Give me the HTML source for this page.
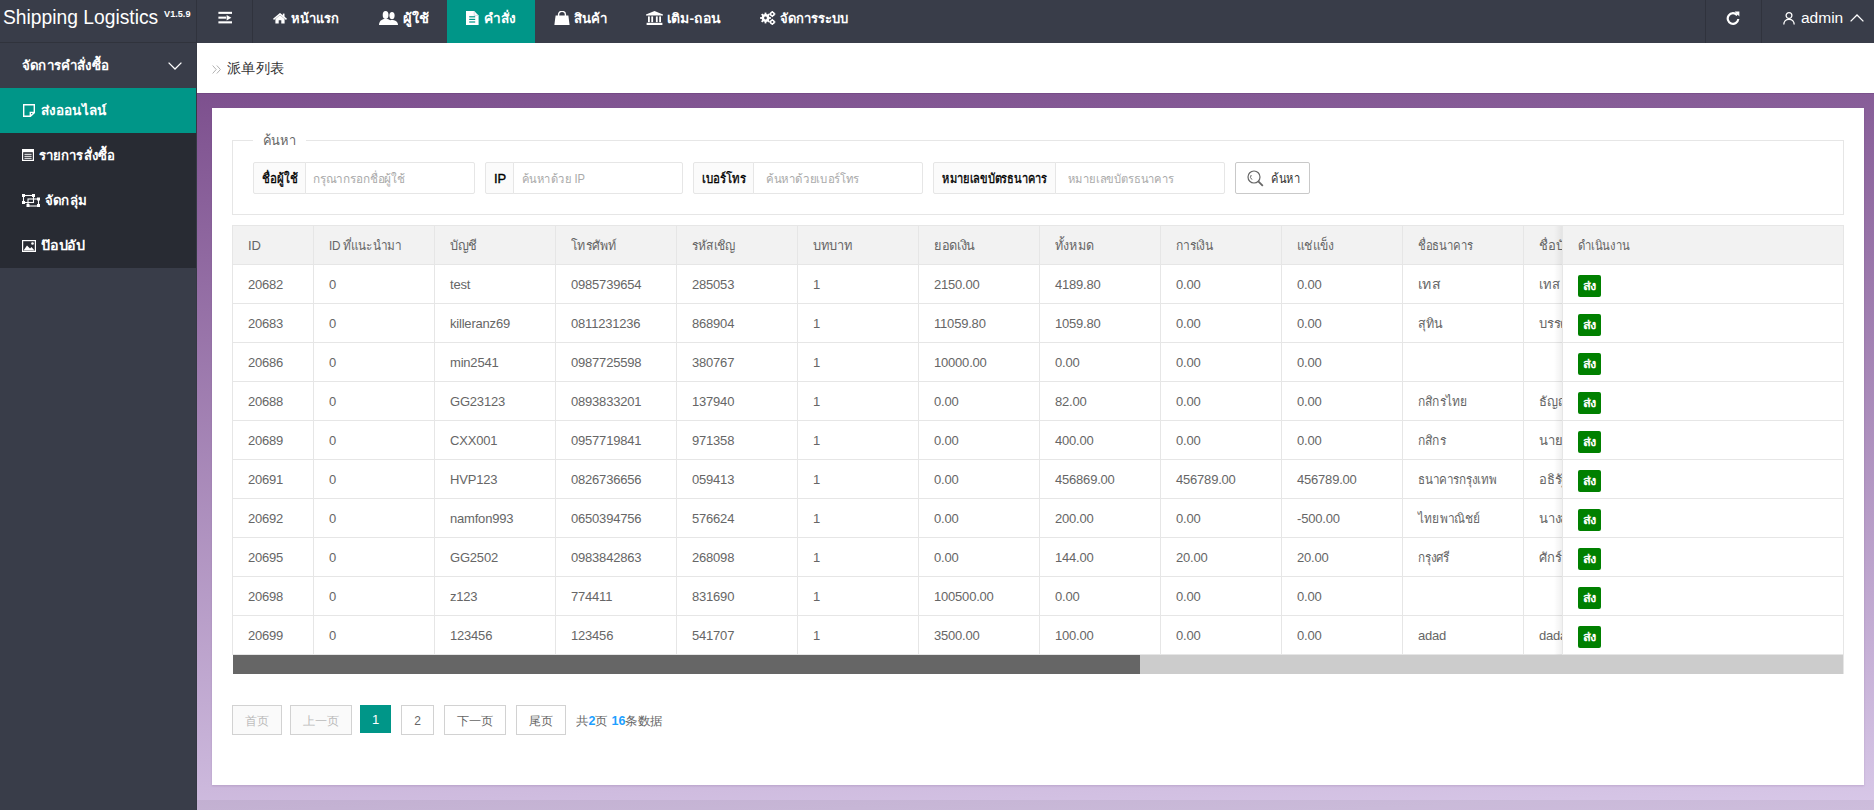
<!DOCTYPE html><html><head><meta charset="utf-8"><title>Shipping Logistics</title><style>*{box-sizing:border-box;margin:0;padding:0}
html,body{width:1874px;height:810px;overflow:hidden;background:#fff;font-family:"Liberation Sans",sans-serif;color:#666}
.hdr{position:absolute;left:0;top:0;width:1874px;height:43px;background:#393D49;z-index:5}
.logo{position:absolute;left:3px;top:5px;color:#fff;font-size:20px;line-height:24px;white-space:nowrap;transform:scaleX(0.963);transform-origin:0 0}
.ver{font-size:9.5px;font-weight:bold;vertical-align:top;position:relative;top:-3px;margin-left:6px}
.vline{position:absolute;top:0;width:1px;height:43px;background:#30333d}
.ico{position:absolute;display:block}
.navact{position:absolute;top:0;height:43px;background:#009688}
.navt{position:absolute;top:0;line-height:38px;color:#fff;font-size:13px;font-weight:bold;white-space:nowrap}
.admin{position:absolute;left:1801px;top:8px;line-height:20px;color:#fff;font-size:15.5px}
.side{position:absolute;left:0;top:43px;width:197px;height:767px;background:#393D49}
.sp{position:absolute;left:22px;top:0;line-height:45px;color:#fff;font-size:13px;font-weight:bold;white-space:nowrap}
.sdl{position:absolute;left:0;top:45px;width:197px;height:180px;background:#282B33}
.sact{position:absolute;left:0;top:45px;width:197px;height:45px;background:#009688}
.si{position:absolute;line-height:45px;color:#fff;font-size:13px;font-weight:bold;white-space:nowrap}
.crumb{position:absolute;left:197px;top:43px;width:1677px;height:50px;background:#fff}
.gt{position:absolute;left:15px;top:15px;font-size:14px;color:#999;line-height:20px}
.ct{position:absolute;left:30px;top:15px;font-size:14px;color:#333;line-height:20px}
.purple{position:absolute;left:197px;top:93px;width:1677px;height:717px;background:linear-gradient(177.1deg,rgb(125,80,142),rgb(216,200,232))}
.ptop{position:absolute;left:197px;top:93px;width:1677px;height:1px;background:rgba(40,10,60,0.12)}
.band{position:absolute;left:197px;top:800px;width:1677px;height:10px;background:rgba(0,0,0,0.05)}
.card{position:absolute;left:212px;top:108px;width:1652px;height:677px;background:#fff;box-shadow:0 1px 2px rgba(60,20,80,0.15)}
.fs{position:absolute;left:232px;top:140px;width:1612px;height:75px;border:1px solid #e6e6e6}
.lg{position:absolute;left:253px;top:130px;width:53px;height:20px;background:#fff;font-size:14px;line-height:20px;color:#666}
.gl{position:absolute;top:162px;height:32px;border:1px solid #e6e6e6;border-radius:2px 0 0 2px;background:#FBFBFB}
.gi{position:absolute;top:162px;height:32px;border:1px solid #e6e6e6;border-radius:0 2px 2px 0;background:#fff}
.sbtn{position:absolute;left:1235px;top:162px;width:75px;height:32px;border:1px solid #C9C9C9;border-radius:2px;background:#fff}
.sbtn>span{position:absolute;left:35px;top:0;line-height:32px;font-size:13px;color:#333}
.tbl{position:absolute;left:232px;top:225px;width:1612px;height:450px;overflow:hidden}
.thead{position:absolute;left:0;top:0;width:1612px;height:39px;background:#f2f2f2}
.cv{position:absolute;top:0;width:1px;height:430px;background:#e6e6e6}
.rh{position:absolute;left:0;width:1612px;height:1px;background:#e6e6e6}
.cell{position:absolute;height:39px;line-height:39px;padding-left:16px;font-size:13px;color:#666;letter-spacing:-0.2px;white-space:nowrap;overflow:hidden}
.th{line-height:40px}
.fix{position:absolute;left:1330px;top:1px;width:281px;height:429px;background:#fff}
.fixshadow{position:absolute;left:-8px;top:0;width:8px;height:430px;background:linear-gradient(to right,rgba(0,0,0,0),rgba(0,0,0,0.06))}
.fhead{position:absolute;left:0;top:0;width:282px;height:39px;background:#f2f2f2;border-left:1px solid #e6e6e6;border-bottom:1px solid #e6e6e6}
.fhead>span{position:absolute;left:15px;line-height:40px;font-size:13px;color:#666}
.frow{position:absolute;left:0;width:282px;height:39px;border-left:1px solid #e6e6e6;border-bottom:1px solid #e6e6e6}
.sbt{position:absolute;left:15px;top:10px;width:23px;height:22px;background:#008000;border-radius:2px;color:#fff;font-weight:bold;font-size:12px;line-height:22px;text-align:center;overflow:hidden;white-space:nowrap}
.sbar{position:absolute;left:1px;top:430px;width:1610px;height:19px;background:#ccc}
.sthumb{position:absolute;left:0;top:0;width:907px;height:19px;background:#666}
.pg{position:absolute;top:705px;height:30px;border:1px solid #d2d2d2;background:#fff;text-align:center;line-height:30px;font-size:12px;color:#666}
.pg.dis{color:#bbb;background:#fafafa}
.pg.cur{top:705px;height:28px;border:0;background:#009688;color:#fff;line-height:30px;font-size:13px}
.pcount{position:absolute;left:576px;top:711px;line-height:20px;font-size:12px;color:#666;white-space:nowrap}
.pcount b{color:#1E9FFF}
.stop{position:absolute;left:0;top:0;width:197px;height:1px;background:#30333c}
.f{display:inline-block;transform-origin:0 50%;white-space:nowrap}
.fc{transform-origin:50% 50%}
.lgt{position:absolute;left:10px;top:0}
.glt{position:absolute;top:163px;line-height:32px;color:#000;font-weight:normal;-webkit-text-stroke:0.35px #000;font-size:13px;white-space:nowrap}
.git{position:absolute;top:163px;line-height:32px;color:#aaa;font-size:12px;white-space:nowrap}
.hbot{position:absolute;left:0;top:42px;width:197px;height:1px;background:#30333c}
.sline{position:absolute;left:196px;top:0;width:1px;height:767px;background:#353944;z-index:2}
</style></head><body><div class="hdr"><div class="logo">Shipping Logistics<span class="ver">V1.5.9</span></div><div class="vline" style="left:196px"></div><div class="hbot"></div><div class="vline" style="left:252px"></div><svg class="ico" style="left:218px;top:11px" width="15" height="13" viewBox="0 0 15 13"><rect x="0.4" y="0.8" width="13.6" height="2.1" fill="#fff"/><rect x="0.4" y="5.6" width="7.8" height="2.1" fill="#fff"/><path d="M8.6 3.9 L13.4 6.65 L8.6 9.4Z" fill="#fff"/><rect x="0.4" y="10.3" width="13.6" height="2.1" fill="#fff"/></svg><div class="navact" style="left:447px;width:88px"></div><svg class="ico" style="left:273px;top:13px" width="14" height="11" viewBox="0 0 14 11"><path d="M2.4 6 L7 2.1 L11.6 6 V10.6 H8.3 V7.3 H5.7 V10.6 H2.4Z" fill="#fff"/><path d="M0.5 6.3 L7 0.9 L13.5 6.3" stroke="#fff" stroke-width="1.5" fill="none"/><rect x="9.8" y="0.6" width="1.7" height="3.4" fill="#fff"/></svg><div class="navt" style="left:291px"><span class="f" style="--w:48">หน้าแรก</span></div><svg class="ico" style="left:379px;top:11px" width="19" height="14" viewBox="0 0 19 14"><ellipse cx="13" cy="4.6" rx="2.6" ry="3.6" fill="#fff"/><path d="M9 14 C9 11.2 10.6 9.3 12.2 9 H14 C16.6 9.3 19 11 19 14Z" fill="#fff"/><path d="M11.5 14 C11.5 10.5 9.5 8.6 8.6 8.2" stroke="#393D49" stroke-width="0.9" fill="none"/><ellipse cx="6.6" cy="4" rx="2.9" ry="4" fill="#fff"/><path d="M0 14 C0 10.6 2.4 8.4 5 8 H8.4 C11 8.4 13.4 10.6 13.4 14Z" fill="#fff"/></svg><div class="navt" style="left:403px"><span class="f" style="--w:26">ผู้ใช้</span></div><svg class="ico" style="left:466px;top:11px" width="13" height="14" viewBox="0 0 13 14"><path d="M0 0 H8.2 L12.6 4.4 V14 H0Z" fill="#fff"/><path d="M8.2 0.3 V4.4 H12.3" stroke="#c9c9d9" stroke-width="0.7" fill="none"/><rect x="3.2" y="5.2" width="6" height="1.2" fill="#009688"/><rect x="3.2" y="7.8" width="6" height="1.2" fill="#009688"/><rect x="3.2" y="10.4" width="6" height="1.2" fill="#009688"/></svg><div class="navt" style="left:484px"><span class="f" style="--w:31.5">คำสั่ง</span></div><svg class="ico" style="left:554px;top:11px" width="16" height="14" viewBox="0 0 16 14"><path d="M4.6 5 V3.6 C4.6 1.6 6 0.4 8 0.4 C10 0.4 11.4 1.6 11.4 3.6 V5" stroke="#fff" stroke-width="1.4" fill="none"/><path d="M1.6 4.6 H14.4 L15.6 14 H0.4Z" fill="#fff"/></svg><div class="navt" style="left:574px"><span class="f" style="--w:33.5">สินค้า</span></div><svg class="ico" style="left:646px;top:11px" width="17" height="14" viewBox="0 0 17 14"><path d="M8.5 0 L17 3.4 V4.6 H0 V3.4Z" fill="#fff"/><rect x="2" y="5.4" width="1.8" height="5.8" fill="#fff"/><rect x="5.3" y="5.4" width="1.8" height="5.8" fill="#fff"/><rect x="9.9" y="5.4" width="1.8" height="5.8" fill="#fff"/><rect x="13.2" y="5.4" width="1.8" height="5.8" fill="#fff"/><rect x="0.6" y="11.8" width="15.8" height="2.2" fill="#fff"/></svg><div class="navt" style="left:667px"><span class="f" style="--w:54">เติม-ถอน</span></div><svg class="ico" style="left:760px;top:11px" width="16" height="14" viewBox="0 0 16 14"><g fill="#fff"><circle cx="5.5" cy="7" r="3.9"/><rect x="4.6" y="1.6" width="1.8" height="10.8"/><rect x="0.1" y="6.1" width="10.8" height="1.8"/><rect x="4.6" y="1.6" width="1.8" height="10.8" transform="rotate(45 5.5 7)"/><rect x="4.6" y="1.6" width="1.8" height="10.8" transform="rotate(-45 5.5 7)"/><circle cx="12.3" cy="3" r="2.5"/><circle cx="12.3" cy="11" r="2.5"/><rect x="11.7" y="-0.1" width="1.2" height="6.2"/><rect x="9.2" y="2.4" width="6.2" height="1.2"/><rect x="11.7" y="7.9" width="1.2" height="6.2"/><rect x="9.2" y="10.4" width="6.2" height="1.2"/></g><circle cx="5.5" cy="7" r="1.4" fill="#393D49"/><circle cx="12.3" cy="3" r="1" fill="#393D49"/><circle cx="12.3" cy="11" r="1" fill="#393D49"/></svg><div class="navt" style="left:780px"><span class="f" style="--w:68">จัดการระบบ</span></div><div class="vline" style="left:1705px"></div><div class="vline" style="left:1761px"></div><svg class="ico" style="left:1726px;top:11px" width="14" height="14" viewBox="0 0 14 14"><path d="M11.2 4.2 A5.3 5.3 0 1 0 12.3 8" stroke="#fff" stroke-width="2.2" fill="none"/><path d="M8.6 0.6 L13.4 0.6 L13.4 5.6Z" fill="#fff"/></svg><svg class="ico" style="left:1783px;top:12px" width="12" height="13" viewBox="0 0 12 13"><circle cx="6" cy="3.6" r="2.9" stroke="#fff" stroke-width="1.3" fill="none"/><path d="M0.8 12.6 C0.8 9 3 7.3 6 7.3 C9 7.3 11.2 9 11.2 12.6" stroke="#fff" stroke-width="1.3" fill="none"/></svg><div class="admin">admin</div><svg class="ico" style="left:1850px;top:14px" width="14" height="8" viewBox="0 0 14 8"><path d="M0.6 7.4 L7 1 L13.4 7.4" stroke="#fff" stroke-width="1.3" fill="none"/></svg></div><div class="side"><div class="sline"></div><div class="sp"><span class="f" style="--w:87">จัดการคำสั่งซื้อ</span></div><svg class="ico" style="left:168px;top:19px" width="14" height="8" viewBox="0 0 14 8"><path d="M0.6 0.6 L7 7 L13.4 0.6" stroke="#fff" stroke-width="1.3" fill="none"/></svg><div class="sdl"></div><div class="sact"></div><svg class="ico" style="left:23px;top:61px" width="12" height="13" viewBox="0 0 12 13"><path d="M0.7 0.7 H11.3 V8.6 L7.4 12.3 H0.7Z" stroke="#fff" stroke-width="1.4" fill="none"/><path d="M11 8.4 H7.3 V12" stroke="#fff" stroke-width="1.4" fill="none"/></svg><div class="si" style="left:41px;top:45px"><span class="f" style="--w:65.5">ส่งออนไลน์</span></div><svg class="ico" style="left:22px;top:106px" width="12" height="12" viewBox="0 0 12 12"><rect x="0.6" y="0.6" width="10.8" height="10.8" stroke="#fff" stroke-width="1.2" fill="none"/><rect x="0.6" y="0.6" width="10.8" height="2.6" fill="#fff"/><rect x="2.4" y="4.8" width="7.2" height="1" fill="#fff"/><rect x="2.4" y="6.8" width="7.2" height="1" fill="#fff"/><rect x="2.4" y="8.8" width="7.2" height="1" fill="#fff"/></svg><div class="si" style="left:39px;top:90px"><span class="f" style="--w:76">รายการสั่งซื้อ</span></div><svg class="ico" style="left:22px;top:151px" width="18" height="13" viewBox="0 0 18 13"><g stroke="#fff" stroke-width="1.1" fill="none"><rect x="1.5" y="1.5" width="10" height="7"/><rect x="6" y="5" width="10.5" height="7"/></g><g fill="#fff"><rect x="0" y="0" width="3" height="3"/><rect x="10" y="0" width="3" height="3"/><rect x="0" y="7" width="3" height="3"/><rect x="4.5" y="10" width="3" height="3"/><rect x="15" y="3.5" width="3" height="3"/><rect x="15" y="10" width="3" height="3"/></g></svg><div class="si" style="left:45px;top:135px"><span class="f" style="--w:42">จัดกลุ่ม</span></div><svg class="ico" style="left:22px;top:197px" width="14" height="12" viewBox="0 0 14 12"><rect x="0.6" y="0.6" width="12.8" height="10.8" stroke="#fff" stroke-width="1.2" fill="none"/><path d="M1.5 10.5 L5 5.5 L8 8.5 L9.5 7 L12.5 10.5Z" fill="#fff"/><circle cx="10.5" cy="3.5" r="1.3" fill="#fff"/></svg><div class="si" style="left:41px;top:180px"><span class="f" style="--w:44">ป๊อปอัป</span></div></div><div class="crumb"><svg class="ico" style="left:15px;top:22px" width="10" height="9" viewBox="0 0 10 9"><path d="M0.6 0.5 L4.2 4.5 L0.6 8.5 M4.8 0.5 L8.4 4.5 L4.8 8.5" stroke="#aaa" stroke-width="0.9" fill="none"/></svg><span class="ct"><span class="f" style="--w:57">派单列表</span></span></div><div class="purple"></div><div class="ptop"></div><div class="band"></div><div class="card"></div><div class="fs"></div><div class="lg"><div class="lgt"><span class="f" style="--w:33">ค้นหา</span></div></div><div class="gl" style="left:253px;width:53px"></div><div class="gi" style="left:305px;width:170px"></div><div class="glt" style="left:262px"><span class="f" style="--w:35.5">ชื่อผู้ใช้</span></div><div class="git" style="left:313px"><span class="f" style="--w:92">กรุณากรอกชื่อผู้ใช้</span></div><div class="gl" style="left:485px;width:29px"></div><div class="gi" style="left:513px;width:170px"></div><div class="glt" style="left:494px;font-weight:normal;font-size:13px">IP</div><div class="git" style="left:522px"><span class="f" style="--w:63">ค้นหาด้วย IP</span></div><div class="gl" style="left:693px;width:61px"></div><div class="gi" style="left:753px;width:170px"></div><div class="glt" style="left:702px"><span class="f" style="--w:44">เบอร์โทร</span></div><div class="git" style="left:766px"><span class="f" style="--w:93">ค้นหาด้วยเบอร์โทร</span></div><div class="gl" style="left:933px;width:123px"></div><div class="gi" style="left:1055px;width:170px"></div><div class="glt" style="left:942px"><span class="f" style="--w:105">หมายเลขบัตรธนาคาร</span></div><div class="git" style="left:1068px"><span class="f" style="--w:106">หมายเลขบัตรธนาคาร</span></div><div class="sbtn"><svg class="ico" style="left:11px;top:7px" width="17" height="17" viewBox="0 0 17 17"><circle cx="7" cy="7" r="6" stroke="#666" stroke-width="1.2" fill="none"/><path d="M11.3 11.3 L15.8 15.8" stroke="#666" stroke-width="1.8"/><path d="M4.2 5 A3.3 3.3 0 0 0 5 9.6" stroke="#666" stroke-width="1" fill="none"/></svg><span><span class="f" style="--w:29">ค้นหา</span></span></div><div class="tbl"><div class="thead"></div><div class="cv" style="left:0px"></div><div class="cv" style="left:81px"></div><div class="cv" style="left:202px"></div><div class="cv" style="left:323px"></div><div class="cv" style="left:444px"></div><div class="cv" style="left:565px"></div><div class="cv" style="left:686px"></div><div class="cv" style="left:807px"></div><div class="cv" style="left:928px"></div><div class="cv" style="left:1049px"></div><div class="cv" style="left:1170px"></div><div class="cv" style="left:1291px"></div><div class="rh" style="top:0px"></div><div class="rh" style="top:39px"></div><div class="rh" style="top:78px"></div><div class="rh" style="top:117px"></div><div class="rh" style="top:156px"></div><div class="rh" style="top:195px"></div><div class="rh" style="top:234px"></div><div class="rh" style="top:273px"></div><div class="rh" style="top:312px"></div><div class="rh" style="top:351px"></div><div class="rh" style="top:390px"></div><div class="rh" style="top:429px"></div><div class="cell th" style="left:0px;top:1px;width:81px">ID</div><div class="cell th" style="left:81px;top:1px;width:121px"><span class="f" style="--w:72">ID ที่แนะนำมา</span></div><div class="cell th" style="left:202px;top:1px;width:121px"><span class="f" style="--w:27">บัญชี</span></div><div class="cell th" style="left:323px;top:1px;width:121px"><span class="f" style="--w:45.5">โทรศัพท์</span></div><div class="cell th" style="left:444px;top:1px;width:121px"><span class="f" style="--w:43.5">รหัสเชิญ</span></div><div class="cell th" style="left:565px;top:1px;width:121px"><span class="f" style="--w:39.5">บทบาท</span></div><div class="cell th" style="left:686px;top:1px;width:121px"><span class="f" style="--w:41">ยอดเงิน</span></div><div class="cell th" style="left:807px;top:1px;width:121px"><span class="f" style="--w:38.5">ทั้งหมด</span></div><div class="cell th" style="left:928px;top:1px;width:121px"><span class="f" style="--w:37">การเงิน</span></div><div class="cell th" style="left:1049px;top:1px;width:121px"><span class="f" style="--w:36.5">แช่แข็ง</span></div><div class="cell th" style="left:1170px;top:1px;width:121px"><span class="f" style="--w:54.5">ชื่อธนาคาร</span></div><div class="cell th" style="left:1291px;top:1px;width:121px">ชื่อบัญชี</div><div class="cell" style="left:0px;top:40px;width:81px">20682</div><div class="cell" style="left:81px;top:40px;width:121px">0</div><div class="cell" style="left:202px;top:40px;width:121px">test</div><div class="cell" style="left:323px;top:40px;width:121px">0985739654</div><div class="cell" style="left:444px;top:40px;width:121px">285053</div><div class="cell" style="left:565px;top:40px;width:121px">1</div><div class="cell" style="left:686px;top:40px;width:121px">2150.00</div><div class="cell" style="left:807px;top:40px;width:121px">4189.80</div><div class="cell" style="left:928px;top:40px;width:121px">0.00</div><div class="cell" style="left:1049px;top:40px;width:121px">0.00</div><div class="cell" style="left:1170px;top:40px;width:121px"><span class="f" style="--w:22">เทส</span></div><div class="cell" style="left:1291px;top:40px;width:121px">เทส</div><div class="cell" style="left:0px;top:79px;width:81px">20683</div><div class="cell" style="left:81px;top:79px;width:121px">0</div><div class="cell" style="left:202px;top:79px;width:121px">killeranz69</div><div class="cell" style="left:323px;top:79px;width:121px">0811231236</div><div class="cell" style="left:444px;top:79px;width:121px">868904</div><div class="cell" style="left:565px;top:79px;width:121px">1</div><div class="cell" style="left:686px;top:79px;width:121px">11059.80</div><div class="cell" style="left:807px;top:79px;width:121px">1059.80</div><div class="cell" style="left:928px;top:79px;width:121px">0.00</div><div class="cell" style="left:1049px;top:79px;width:121px">0.00</div><div class="cell" style="left:1170px;top:79px;width:121px"><span class="f" style="--w:24.5">สุทิน</span></div><div class="cell" style="left:1291px;top:79px;width:121px">บรรดล</div><div class="cell" style="left:0px;top:118px;width:81px">20686</div><div class="cell" style="left:81px;top:118px;width:121px">0</div><div class="cell" style="left:202px;top:118px;width:121px">min2541</div><div class="cell" style="left:323px;top:118px;width:121px">0987725598</div><div class="cell" style="left:444px;top:118px;width:121px">380767</div><div class="cell" style="left:565px;top:118px;width:121px">1</div><div class="cell" style="left:686px;top:118px;width:121px">10000.00</div><div class="cell" style="left:807px;top:118px;width:121px">0.00</div><div class="cell" style="left:928px;top:118px;width:121px">0.00</div><div class="cell" style="left:1049px;top:118px;width:121px">0.00</div><div class="cell" style="left:1170px;top:118px;width:121px"></div><div class="cell" style="left:1291px;top:118px;width:121px"></div><div class="cell" style="left:0px;top:157px;width:81px">20688</div><div class="cell" style="left:81px;top:157px;width:121px">0</div><div class="cell" style="left:202px;top:157px;width:121px">GG23123</div><div class="cell" style="left:323px;top:157px;width:121px">0893833201</div><div class="cell" style="left:444px;top:157px;width:121px">137940</div><div class="cell" style="left:565px;top:157px;width:121px">1</div><div class="cell" style="left:686px;top:157px;width:121px">0.00</div><div class="cell" style="left:807px;top:157px;width:121px">82.00</div><div class="cell" style="left:928px;top:157px;width:121px">0.00</div><div class="cell" style="left:1049px;top:157px;width:121px">0.00</div><div class="cell" style="left:1170px;top:157px;width:121px"><span class="f" style="--w:49.5">กสิกรไทย</span></div><div class="cell" style="left:1291px;top:157px;width:121px">ธัญญา</div><div class="cell" style="left:0px;top:196px;width:81px">20689</div><div class="cell" style="left:81px;top:196px;width:121px">0</div><div class="cell" style="left:202px;top:196px;width:121px">CXX001</div><div class="cell" style="left:323px;top:196px;width:121px">0957719841</div><div class="cell" style="left:444px;top:196px;width:121px">971358</div><div class="cell" style="left:565px;top:196px;width:121px">1</div><div class="cell" style="left:686px;top:196px;width:121px">0.00</div><div class="cell" style="left:807px;top:196px;width:121px">400.00</div><div class="cell" style="left:928px;top:196px;width:121px">0.00</div><div class="cell" style="left:1049px;top:196px;width:121px">0.00</div><div class="cell" style="left:1170px;top:196px;width:121px"><span class="f" style="--w:28">กสิกร</span></div><div class="cell" style="left:1291px;top:196px;width:121px">นาย</div><div class="cell" style="left:0px;top:235px;width:81px">20691</div><div class="cell" style="left:81px;top:235px;width:121px">0</div><div class="cell" style="left:202px;top:235px;width:121px">HVP123</div><div class="cell" style="left:323px;top:235px;width:121px">0826736656</div><div class="cell" style="left:444px;top:235px;width:121px">059413</div><div class="cell" style="left:565px;top:235px;width:121px">1</div><div class="cell" style="left:686px;top:235px;width:121px">0.00</div><div class="cell" style="left:807px;top:235px;width:121px">456869.00</div><div class="cell" style="left:928px;top:235px;width:121px">456789.00</div><div class="cell" style="left:1049px;top:235px;width:121px">456789.00</div><div class="cell" style="left:1170px;top:235px;width:121px"><span class="f" style="--w:78.5">ธนาคารกรุงเทพ</span></div><div class="cell" style="left:1291px;top:235px;width:121px">อธิรัฐ</div><div class="cell" style="left:0px;top:274px;width:81px">20692</div><div class="cell" style="left:81px;top:274px;width:121px">0</div><div class="cell" style="left:202px;top:274px;width:121px">namfon993</div><div class="cell" style="left:323px;top:274px;width:121px">0650394756</div><div class="cell" style="left:444px;top:274px;width:121px">576624</div><div class="cell" style="left:565px;top:274px;width:121px">1</div><div class="cell" style="left:686px;top:274px;width:121px">0.00</div><div class="cell" style="left:807px;top:274px;width:121px">200.00</div><div class="cell" style="left:928px;top:274px;width:121px">0.00</div><div class="cell" style="left:1049px;top:274px;width:121px">-500.00</div><div class="cell" style="left:1170px;top:274px;width:121px"><span class="f" style="--w:62">ไทยพาณิชย์</span></div><div class="cell" style="left:1291px;top:274px;width:121px">นางสาว</div><div class="cell" style="left:0px;top:313px;width:81px">20695</div><div class="cell" style="left:81px;top:313px;width:121px">0</div><div class="cell" style="left:202px;top:313px;width:121px">GG2502</div><div class="cell" style="left:323px;top:313px;width:121px">0983842863</div><div class="cell" style="left:444px;top:313px;width:121px">268098</div><div class="cell" style="left:565px;top:313px;width:121px">1</div><div class="cell" style="left:686px;top:313px;width:121px">0.00</div><div class="cell" style="left:807px;top:313px;width:121px">144.00</div><div class="cell" style="left:928px;top:313px;width:121px">20.00</div><div class="cell" style="left:1049px;top:313px;width:121px">20.00</div><div class="cell" style="left:1170px;top:313px;width:121px"><span class="f" style="--w:31.5">กรุงศรี</span></div><div class="cell" style="left:1291px;top:313px;width:121px">ศักร์</div><div class="cell" style="left:0px;top:352px;width:81px">20698</div><div class="cell" style="left:81px;top:352px;width:121px">0</div><div class="cell" style="left:202px;top:352px;width:121px">z123</div><div class="cell" style="left:323px;top:352px;width:121px">774411</div><div class="cell" style="left:444px;top:352px;width:121px">831690</div><div class="cell" style="left:565px;top:352px;width:121px">1</div><div class="cell" style="left:686px;top:352px;width:121px">100500.00</div><div class="cell" style="left:807px;top:352px;width:121px">0.00</div><div class="cell" style="left:928px;top:352px;width:121px">0.00</div><div class="cell" style="left:1049px;top:352px;width:121px">0.00</div><div class="cell" style="left:1170px;top:352px;width:121px"></div><div class="cell" style="left:1291px;top:352px;width:121px"></div><div class="cell" style="left:0px;top:391px;width:81px">20699</div><div class="cell" style="left:81px;top:391px;width:121px">0</div><div class="cell" style="left:202px;top:391px;width:121px">123456</div><div class="cell" style="left:323px;top:391px;width:121px">123456</div><div class="cell" style="left:444px;top:391px;width:121px">541707</div><div class="cell" style="left:565px;top:391px;width:121px">1</div><div class="cell" style="left:686px;top:391px;width:121px">3500.00</div><div class="cell" style="left:807px;top:391px;width:121px">100.00</div><div class="cell" style="left:928px;top:391px;width:121px">0.00</div><div class="cell" style="left:1049px;top:391px;width:121px">0.00</div><div class="cell" style="left:1170px;top:391px;width:121px">adad</div><div class="cell" style="left:1291px;top:391px;width:121px">dadad</div><div class="fix"><div class="fixshadow"></div><div class="fhead"><span><span class="f" style="--w:51.5">ดำเนินงาน</span></span></div><div class="frow" style="top:39px"><span class="sbt"><span class="f fc" style="--w:14">ส่ง</span></span></div><div class="frow" style="top:78px"><span class="sbt"><span class="f fc" style="--w:14">ส่ง</span></span></div><div class="frow" style="top:117px"><span class="sbt"><span class="f fc" style="--w:14">ส่ง</span></span></div><div class="frow" style="top:156px"><span class="sbt"><span class="f fc" style="--w:14">ส่ง</span></span></div><div class="frow" style="top:195px"><span class="sbt"><span class="f fc" style="--w:14">ส่ง</span></span></div><div class="frow" style="top:234px"><span class="sbt"><span class="f fc" style="--w:14">ส่ง</span></span></div><div class="frow" style="top:273px"><span class="sbt"><span class="f fc" style="--w:14">ส่ง</span></span></div><div class="frow" style="top:312px"><span class="sbt"><span class="f fc" style="--w:14">ส่ง</span></span></div><div class="frow" style="top:351px"><span class="sbt"><span class="f fc" style="--w:14">ส่ง</span></span></div><div class="frow" style="top:390px"><span class="sbt"><span class="f fc" style="--w:14">ส่ง</span></span></div></div><div class="cv" style="left:1611px;height:449px;z-index:3"></div><div class="sbar"><div class="sthumb"></div></div></div><div class="pg dis" style="left:232px;width:50px"><span class="f fc" style="--w:24">首页</span></div><div class="pg dis" style="left:290px;width:62px"><span class="f fc" style="--w:36.5">上一页</span></div><div class="pg cur" style="left:360px;width:31px">1</div><div class="pg " style="left:401px;width:33px">2</div><div class="pg " style="left:444px;width:62px"><span class="f fc" style="--w:36.5">下一页</span></div><div class="pg " style="left:516px;width:50px"><span class="f fc" style="--w:24">尾页</span></div><div class="pcount"><span class="f" style="--w:87">共<b>2</b>页 <b>16</b>条数据</span></div><script>document.querySelectorAll(".f").forEach(function(e){var t=parseFloat(e.style.getPropertyValue("--w"));var w=e.getBoundingClientRect().width;if(w>0&&t>0){e.style.transform="scaleX("+(t/w)+")";}});</script></body></html>
